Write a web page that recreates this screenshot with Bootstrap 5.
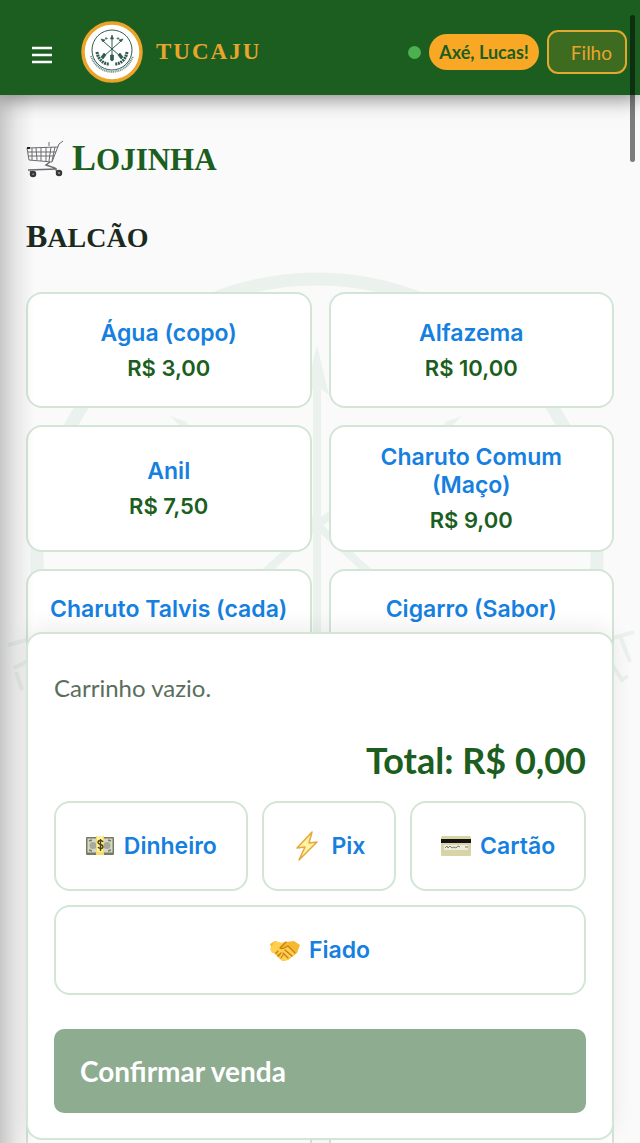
<!DOCTYPE html>
<html lang="pt-BR">
<head>
<meta charset="utf-8">
<meta name="viewport" content="width=device-width, initial-scale=1">
<title>Tucaju - Lojinha</title>
<link rel="stylesheet" href="https://cdn.jsdelivr.net/npm/bootstrap@5.3.0/dist/css/bootstrap.min.css">
<style>
:root { --leaf: #1b5e20; --gold: #f9a825; --line: #d3e6d5; --link: #1580e0; }
body { font-family: Lato, sans-serif; background: #fafafa; color: #1b2a1e; }
.topbar { background: var(--leaf); height: 95px; padding: 9px 13px 0 24px; box-shadow: 0 3px 20px rgba(0,0,0,.5); z-index: 3; }
.menu-btn { width: 36px; height: 36px; padding: 6px 0 0; }
.crest { width: 62px; height: 62px; margin-left: 21px; }
.brand-name { font: 600 23px/30px "Liberation Serif", serif; letter-spacing: 2px; color: #e9a52b; margin-left: 13px; }
.online { width: 13px; height: 13px; background: #4caf50; }
.hello { background: var(--gold); color: var(--leaf); font-size: 18px; line-height: 36px; padding: 0 10px; }
.role-btn { border: 2px solid #e3a92e; border-radius: 11px; background: #3d6b1f; color: #e9a52b; font-size: 19px; line-height: 24px; padding: 9px 13px 7px 22px; }
.shop { padding: 41px 26px 0; }
.caps { font-family: "Liberation Serif", serif; text-transform: uppercase; font-weight: 700; }
.title { font-size: 31px; line-height: 44px; color: var(--leaf); margin-bottom: 34px; }
.title span { display: block; }
.title span::first-letter { font-size: 36px; }
.section-name { font-size: 28px; line-height: 40px; margin-bottom: 34px; }
.section-name::first-letter { font-size: 32px; }
.goods { display: grid; grid-template-columns: 1fr 1fr; grid-template-rows: 116px auto 1fr; gap: 17px; margin-bottom: -24px; }
.tile { background: #fff; border: 2px solid var(--line); border-radius: 16px; color: var(--link); font: 600 23px/28px Inter, sans-serif; padding: 16px 20px; min-width: 0; }
.tile.tall { justify-content: flex-start !important; padding-top: 24px; }
.price { font-weight: 600; font-size: 22px; color: var(--leaf); margin-top: 7px; }
.seal { top: 165px; left: 50%; width: 640px; height: 620px; transform: translateX(-50%); }
.cart { left: 26px; right: 26px; bottom: 3px; background: #fefffe; border: 2px solid var(--line); border-radius: 16px; padding: 38px 26px 25px; box-shadow: 0 -5px 22px rgba(0,0,0,.07); }
.empty-note { font-size: 24px; line-height: 32px; color: #5b6e5e; }
.total { font-size: 36px; line-height: 48px; color: var(--leaf); margin: 32px 0 17px; }
.pay-list { gap: 14px; }
.pay { border: 2px solid var(--line); border-radius: 16px; background: #fff; color: var(--link); font: 600 23px/28px Inter, sans-serif; height: 90px; padding: 0 28px; gap: 9px; }
.pay svg { width: 30px; height: 30px; }
.confirm { height: 84px; margin-top: 34px; border-radius: 10px; background: #8dac90; color: #fff; font-size: 28px; padding: 0 26px; }
.edge { width: 34px; top: 0; left: 0; background: linear-gradient(90deg, rgba(0,0,0,.2), rgba(0,0,0,.07) 50%, transparent); z-index: 2; pointer-events: none; }
.thumb { top: 15px; right: 5px; width: 5px; height: 147px; border-radius: 3px; background: rgba(0,0,0,.5); z-index: 5; }
</style>
</head>
<body>
<div class="vh-100 d-flex flex-column position-relative overflow-hidden">
  <header class="topbar d-flex align-items-center flex-shrink-0 position-relative">
    <button class="menu-btn btn border-0 d-flex align-items-center justify-content-center" aria-label="Menu">
      <svg width="20" height="18" viewBox="0 0 20 18" stroke="#fff" stroke-width="2.6"><path d="M0 2h20M0 9h20M0 16h20"/></svg>
    </button>
    <svg class="crest flex-shrink-0" viewBox="0 0 62 62" fill="none">
      <circle cx="31" cy="31" r="29" fill="#fff" stroke="#eda32a" stroke-width="3.500"/>
      <circle cx="31" cy="29" r="20" stroke="#315c50" stroke-width="1"/>
      <path d="M31 16v22M22 20l17 15M40 20L23 35" stroke="#315c50" stroke-width="1"/>
      <path d="M31 14l-1.500 4h3zM20 18l4 1-2 2zM42 18l-4 1 2 2zM29.500 34h3v5l-1.500 1-1.500-1zM20 36l3-4 2 2-3 4zM42 36l-3-4-2 2 3 4zM25 16v3M24 17.500h3M37 16v3M35.500 17.500h3" fill="#315c50" stroke="#315c50" stroke-width=".7"/>
      <path d="M16 31c1 7 6 12 12 12M46 31c-1 7-6 12-12 12" stroke="#315c50" stroke-width="3" stroke-dasharray="2 .7"/>
      <path d="M10 35c7 21 35 21 42 0" stroke="#7d968f" stroke-width="2" stroke-dasharray="1.200 .6"/>
    </svg>
    <span class="brand-name">TUCAJU</span>
    <div class="ms-auto d-flex align-items-center gap-2">
      <span class="online rounded-circle"></span>
      <span class="hello rounded-pill fw-bold text-nowrap">Axé, Lucas!</span>
      <button class="role-btn">Filho</button>
    </div>
  </header>

  <main class="shop flex-grow-1 d-flex flex-column position-relative">
    <svg class="seal position-absolute" viewBox="0 0 640 620" fill="none" stroke="#ebf2ed">
      <circle cx="317" cy="299" r="280" stroke-width="13"/>
      <path d="M317 110V560M186 168L317 265 240 335M448 168L317 265 394 335" stroke-width="8"/>
      <path d="M317 85l-12 50 12-9 12 9zM170 156l17 6 1 12zM462 156l-17 6-1 12z" fill="#ebf2ed" stroke="none"/>
      <path d="M8 385l26-7M14 408l16-8 2 30M16 412l6 18M606 380l28-8M620 376l10 26M608 398l14 22 6-4" stroke-width="4"/>
    </svg>
    <h1 class="title caps d-flex align-items-center position-relative">
      <svg class="me-2" width="38" height="38" viewBox="0 0 38 38" fill="none" stroke="#6c6c70">
        <path d="M37 1l-4 3-7 18-23-2L1 8l31-1M2 12h28M2 16h26M6 8v12M10 8l1 12M15 8v13M20 7v14M25 7l-2 14M29 7l-3 14M23 2v4" stroke-width="1"/>
        <path d="M24 22l-4 3 9 3 2 4M2 30l29-1M4 31l3 3" stroke-width="1.500"/>
        <path d="M1 8h3" stroke="#222" stroke-width="2"/>
        <circle cx="7" cy="34" r="2" stroke="#38383b" stroke-width="2.500"/><circle cx="33" cy="33" r="2" stroke="#38383b" stroke-width="2.500"/>
      </svg><span>Lojinha</span>
    </h1>
    <h2 class="section-name caps position-relative">Balcão</h2>
    <div class="goods flex-grow-1 position-relative">
      <button class="tile d-flex flex-column align-items-center justify-content-center"><span>Água (copo)</span><span class="price">R$ 3,00</span></button>
      <button class="tile d-flex flex-column align-items-center justify-content-center"><span>Alfazema</span><span class="price">R$ 10,00</span></button>
      <button class="tile d-flex flex-column align-items-center justify-content-center"><span>Anil</span><span class="price">R$ 7,50</span></button>
      <button class="tile d-flex flex-column align-items-center justify-content-center"><span>Charuto Comum (Maço)</span><span class="price">R$ 9,00</span></button>
      <button class="tile tall d-flex flex-column align-items-center text-nowrap"><span>Charuto Talvis (cada)</span></button>
      <button class="tile tall d-flex flex-column align-items-center text-nowrap"><span>Cigarro (Sabor)</span></button>
    </div>
  </main>

  <section class="cart position-absolute z-3" aria-label="Carrinho">
    <p class="empty-note mb-0">Carrinho vazio.</p>
    <p class="total fw-bold text-end">Total: R$ 0,00</p>
    <div class="pay-list d-flex flex-wrap">
      <button class="pay flex-fill d-flex align-items-center justify-content-center">
        <svg viewBox="0 0 30 30"><rect x="1" y="6" width="28" height="18" rx="1" fill="#777967"/><rect x="2.500" y="7.500" width="25" height="14" fill="#d5d8c2"/><path d="M4 10l3-1M4 19l3 1M26 10l-3-1M26 19l-3 1" stroke="#77796a" stroke-width="1.500"/><circle cx="8" cy="14.500" r="3.500" fill="#a7aa98"/><circle cx="22" cy="14.500" r="3.500" fill="#a7aa98"/><path d="M11 5h8v19h-8z" fill="#f6dc63"/><path d="M12 5h6v16h-6z" fill="#fff0a2"/><path d="M18 11c-1-2-5-2-5 .5s5 1.500 5 4-4 2.500-5 .5M15.500 8v12" fill="none" stroke="#47431f" stroke-width="1.400"/></svg>Dinheiro
      </button>
      <button class="pay flex-fill d-flex align-items-center justify-content-center">
        <svg viewBox="0 0 30 30"><path d="M20 1L5 17l8-1L7 29 25 11l-8 1z" fill="#fff3a5" stroke="#e9a63a" stroke-width="1.500" stroke-linejoin="round"/></svg>Pix
      </button>
      <button class="pay flex-fill d-flex align-items-center justify-content-center">
        <svg viewBox="0 0 30 30"><rect x="0" y="5" width="30" height="20" rx="1.500" fill="#d9d4a7"/><path d="M0 8h30v4H0z" fill="#151310"/><path d="M3 14h24v5H3z" fill="#eeecdc"/><path d="M4 17l2-2 1 2 2-2 2 2 2-1 2 1 2-2 2 1M24 16h3" fill="none" stroke="#7e7c70"/></svg>Cartão
      </button>
      <button class="pay w-100 d-flex align-items-center justify-content-center">
        <svg viewBox="0 0 30 30"><path d="M0 9l5-3 6 2 5-1 8-1 6 4-3 8-9 7-5 1-4-3-6-6z" fill="#f6b82f"/><path d="M5 6l6 2 5-1-6 6c3 2 6-1 8-2l8 7-9 7-5 1-3-3 2-3-4-3-5 1-2-4z" fill="#ffcf4d"/><path d="M16 7l-6 6c3 2 6-1 8-2l7 7M15 15l7 6M13 18l5 5M6 18l2-2M8 21l3-3M11 23l2-3" fill="none" stroke="#c47c15" stroke-width="1.200" stroke-linecap="round"/></svg>Fiado
      </button>
    </div>
    <button class="confirm border-0 w-100 text-start fw-bold d-block">Confirmar venda</button>
  </section>
  <div class="edge position-absolute h-100"></div>
  <div class="thumb position-absolute"></div>
</div>
<script src="https://cdn.jsdelivr.net/npm/bootstrap@5.3.0/dist/js/bootstrap.bundle.min.js"></script>
</body>
</html>
